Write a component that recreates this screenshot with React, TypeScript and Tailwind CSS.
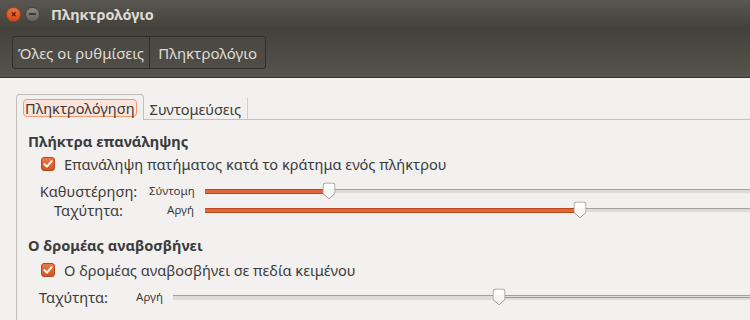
import React from "react";

const font = { fontFamily: '"Noto Sans", "DejaVu Sans", sans-serif' };

// Ubuntu-style checked checkbox
const CheckBox: React.FC = () => (
	<span className="w-[14px] h-[14px] rounded-[3px] border border-[#b4461c] bg-gradient-to-b from-[#ec7a4a] to-[#d0561f] flex items-center justify-center shrink-0">
		<svg width="10" height="10" viewBox="0 0 10 10">
			<path d="M1.5 5.2 L4 7.6 L8.6 2.2" fill="none" stroke="white" strokeWidth="2" strokeLinecap="round" strokeLinejoin="round" />
		</svg>
	</span>
);

const Thumb: React.FC = () => (
	<svg width="13" height="17" viewBox="0 0 13 17" className="absolute top-1/2 -translate-y-1/2 -translate-x-1/2">
		<path d="M3 0.5 H10 Q12.5 0.5 12.5 3 V11 L6.5 16.3 L0.5 11 V3 Q0.5 0.5 3 0.5 Z" fill="#f7f7f6" stroke="#9c9a97" />
		<path d="M3 1.5 H10 Q11.5 1.5 11.5 3 V6 H1.5 V3 Q1.5 1.5 3 1.5 Z" fill="#ffffff" />
	</svg>
);

// GTK scale: orange fill on the left, grey trough on the right
const Slider: React.FC<{ pos: number; inverted?: boolean }> = ({ pos, inverted }) => (
	<div className="relative flex-1 h-[18px] flex items-center">
		<div className="relative w-full h-[5px]">
			{inverted ? (
				<>
					<div className="absolute left-0 top-0 h-full bg-[#dcdbd9] border-t border-[#a3a19e]" style={{ width: pos }} />
					<div className="absolute right-0 top-0 h-full border-t border-[#a3a19e] bg-[#e0dfdd]" style={{ left: pos }}>
						<div className="h-[1px] mt-[1px] bg-[#d9845f]" />
					</div>
				</>
			) : (
				<>
					<div className="absolute left-0 top-0 h-full bg-[#e2683a] border-t border-b border-[#b9481c]" style={{ width: pos }} />
					<div className="absolute right-0 top-0 h-[4px] bg-[#dcdbd9] border-t border-[#a3a19e]" style={{ left: pos }} />
				</>
			)}
		</div>
		<div className="absolute top-0 h-full" style={{ left: pos }}>
			<Thumb />
		</div>
	</div>
);

const App: React.FC = () => {
	return (
		<div className="w-[750px] h-[320px] overflow-hidden bg-[#f2f1f0] text-[#3c3c3c] leading-[18px]" style={font}>
			{/* title bar */}
			<div className="h-[28px] bg-gradient-to-b from-[#5a5751] to-[#43413c] flex items-center pl-[6px] gap-[4px]">
				<span className="w-[15px] h-[15px] rounded-full bg-gradient-to-b from-[#f0703e] to-[#d24a16] border border-[#a8401a] flex items-center justify-center text-[#4a1a08] text-[10px] leading-none font-bold">
					×
				</span>
				<span className="w-[15px] h-[15px] rounded-full bg-gradient-to-b from-[#8a8883] to-[#65635e] border border-[#45443f] flex items-center justify-center">
					<span className="w-[7px] h-[2px] bg-[#3a3935]" />
				</span>
				<span className="ml-[7px] text-[14.5px] font-bold text-[#dfdbd2]">Πληκτρολόγιο</span>
			</div>

			{/* toolbar */}
			<div className="h-[50px] bg-gradient-to-b from-[#43413c] to-[#57544d] border-b border-[#34332f] flex items-center pl-[12px]">
				<div className="flex h-[33px] rounded-[3px] border border-[#2f2e2a] bg-gradient-to-b from-[#4a4843] to-[#504d47] text-[#dfdbd2] text-[15px]">
					<div className="px-[5px] flex items-center border-r border-[#2f2e2a]">Όλες οι ρυθμίσεις</div>
					<div className="px-[8px] flex items-center">Πληκτρολόγιο</div>
				</div>
			</div>

			{/* notebook */}
			<div className="pt-[16px] pl-[16px]">
				<div className="flex items-end h-[26px]">
					<div className="h-[26px] px-[6px] pt-[4px] border border-b-0 border-[#c3c0bb] rounded-t-[4px] bg-[#f2f1f0] relative z-10">
						<div className="px-[1px] h-[18px] flex items-center rounded-[4px] border border-[#f19a74] bg-[#fbe5da] text-[14.6px] text-[#3c3c3c]">
							Πληκτρολόγηση
						</div>
					</div>
					<div className="h-[22px] px-[6px] flex items-center border-r border-[#d3d0cc] border-b border-b-[#c3c0bb] text-[14.6px]">
						Συντομεύσεις
					</div>
					<div className="flex-1 border-b border-[#c3c0bb]" />
				</div>

				<div className="border-l border-[#c3c0bb] -mt-[1px] pl-[11px] pt-[13px] h-[210px]">
					<div className="text-[14.6px] font-bold">Πλήκτρα επανάληψης</div>
					<div className="flex items-center gap-[9px] pl-[13px] mt-[5px] h-[18px]">
						<CheckBox />
						<span className="text-[14.6px]">Επανάληψη πατήματος κατά το κράτημα ενός πλήκτρου</span>
					</div>

					<div className="mt-[9px] flex flex-col gap-[1px]">
						<div className="flex items-center h-[18px]">
							<span className="w-[121px] text-center text-[14.6px] whitespace-nowrap">Καθυστέρηση:</span>
							<span className="w-[45px] text-right text-[11.5px] whitespace-nowrap">Σύντομη</span>
							<span className="w-[11px]" />
							<Slider pos={124} />
						</div>
						<div className="flex items-center h-[18px]">
							<span className="w-[121px] text-center text-[14.6px]">Ταχύτητα:</span>
							<span className="w-[45px] text-right text-[11.5px]">Αργή</span>
							<span className="w-[11px]" />
							<Slider pos={375} />
						</div>
					</div>

					<div className="mt-[17px] text-[14.6px] font-bold">Ο δρομέας αναβοσβήνει</div>
					<div className="flex items-center gap-[9px] pl-[13px] mt-[7px] h-[18px]">
						<CheckBox />
						<span className="text-[14.6px]">Ο δρομέας αναβοσβήνει σε πεδία κειμένου</span>
					</div>

					<div className="mt-[9px] flex items-center h-[18px]">
						<span className="w-[91px] text-center text-[14.6px]">Ταχύτητα:</span>
						<span className="w-[44px] text-right text-[11.5px]">Αργή</span>
						<span className="w-[10px]" />
						<Slider pos={326} inverted />
					</div>
				</div>
			</div>
		</div>
	);
};

export default App;
